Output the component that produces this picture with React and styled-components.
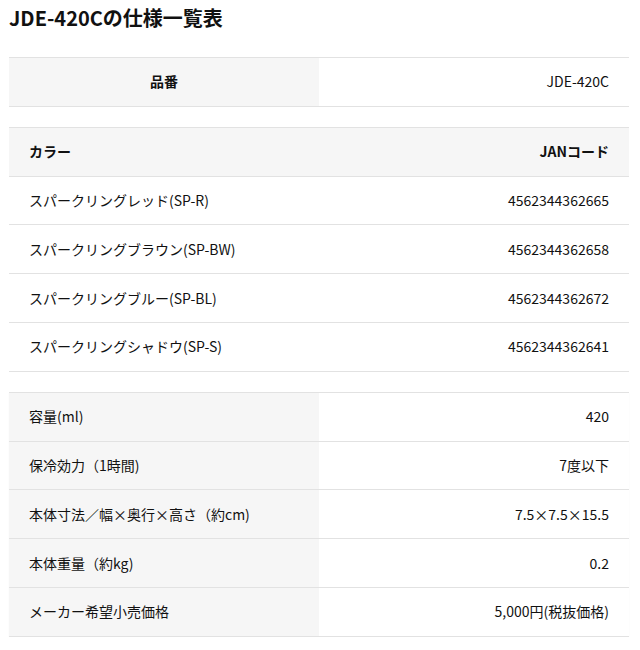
import React from "react";
import styled, { createGlobalStyle } from "styled-components";

const GlobalStyle = createGlobalStyle`
  body {
    margin: 0;
    background: #fff;
    font-family: "Noto Sans CJK JP", "Noto Sans", sans-serif;
    color: #111;
  }
`;

const Page = styled.div`
  padding: 0 11px 0 9px;
`;

const Title = styled.h2`
  margin: 0;
  padding-top: 3px;
  font-size: 20px;
  line-height: 30px;
  font-weight: 700;
  color: #111;
`;

const SpecTable = styled.table`
  width: 100%;
  border-collapse: collapse;
  table-layout: fixed;
  margin-top: ${(p) => p.$gap}px;
  font-size: 14px;
  box-shadow: ${(p) => (p.$shadow ? "0 1px 1px rgba(0,0,0,0.06)" : "none")};
`;

const Row = styled.tr`
  border-top: 1px solid #e2e2e2;
  border-bottom: 1px solid #e2e2e2;
  background: ${(p) => (p.$head ? "#f6f6f6" : "transparent")};
`;

const Cell = styled.td`
  height: 47.8px;
  padding: 0 20px;
  line-height: 21px;
  vertical-align: middle;
  text-align: ${(p) => p.$align || "left"};
  font-weight: ${(p) => (p.$bold ? 700 : 400)};
  background: ${(p) => (p.$shade ? "#f6f6f6" : "transparent")};
`;

const colors = [
  ["スパークリングレッド(SP-R)", "4562344362665"],
  ["スパークリングブラウン(SP-BW)", "4562344362658"],
  ["スパークリングブルー(SP-BL)", "4562344362672"],
  ["スパークリングシャドウ(SP-S)", "4562344362641"],
];

const specs = [
  ["容量(ml)", "420"],
  ["保冷効力（1時間)", "7度以下"],
  ["本体寸法／幅×奥行×高さ（約cm)", "7.5×7.5×15.5"],
  ["本体重量（約kg)", "0.2"],
  ["メーカー希望小売価格", "5,000円(税抜価格)"],
];

export default function App() {
  return (
    <Page>
      <GlobalStyle />
      <Title>JDE-420Cの仕様一覧表</Title>

      <SpecTable $gap={24}>
        <tbody>
          <Row>
            <Cell $shade $bold $align="center">品番</Cell>
            <Cell $align="right">JDE-420C</Cell>
          </Row>
        </tbody>
      </SpecTable>

      <SpecTable $gap={20}>
        <tbody>
          <Row $head>
            <Cell $bold>カラー</Cell>
            <Cell $bold $align="right">JANコード</Cell>
          </Row>
          {colors.map(([name, code]) => (
            <Row key={code}>
              <Cell>{name}</Cell>
              <Cell $align="right">{code}</Cell>
            </Row>
          ))}
        </tbody>
      </SpecTable>

      <SpecTable $gap={20} $shadow>
        <tbody>
          {specs.map(([label, value]) => (
            <Row key={label}>
              <Cell $shade>{label}</Cell>
              <Cell $align="right">{value}</Cell>
            </Row>
          ))}
        </tbody>
      </SpecTable>
    </Page>
  );
}
